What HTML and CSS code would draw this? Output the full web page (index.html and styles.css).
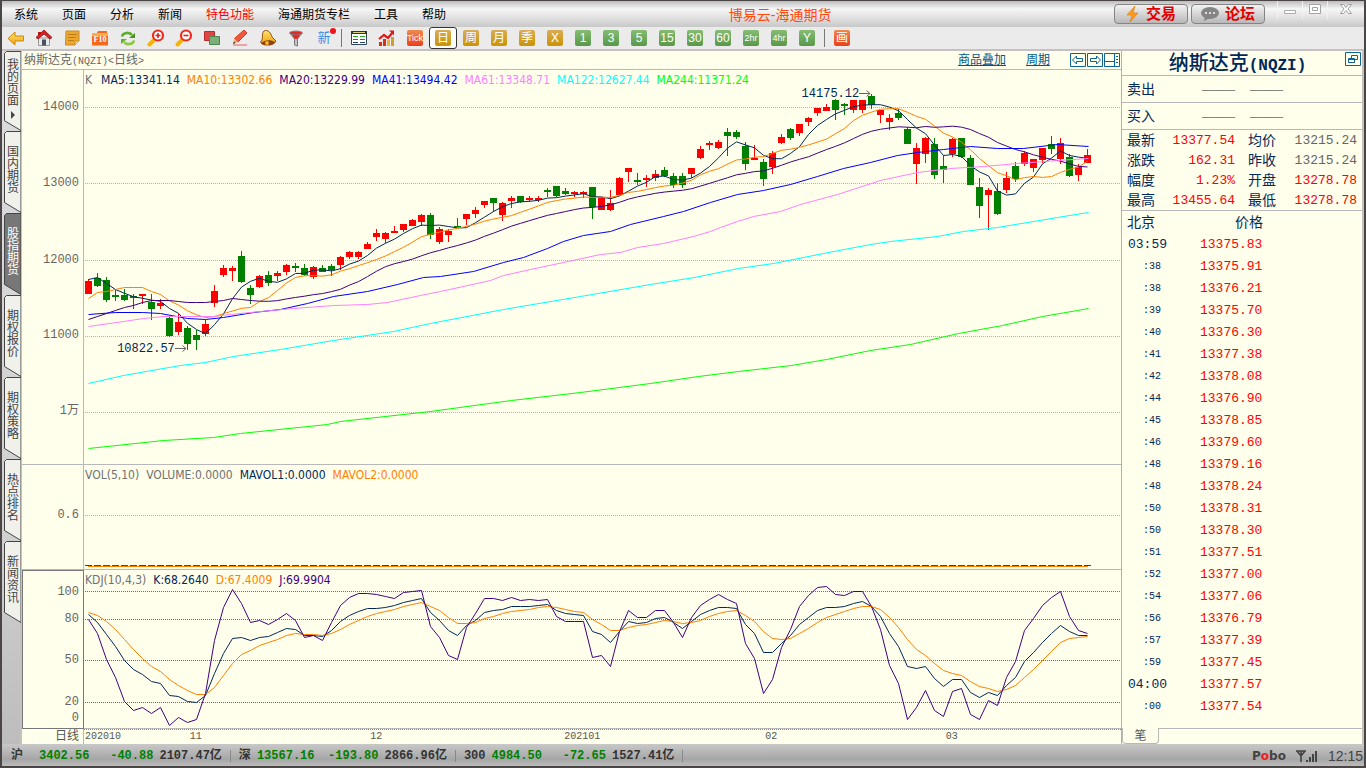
FILE: index.html
```html
<!DOCTYPE html>
<html lang="zh-CN">
<head>
<meta charset="utf-8">
<title>博易云-海通期货</title>
<link rel="stylesheet" href="styles.css">
</head>
<body>
<svg class="defs" aria-hidden="true">
  <defs>
    <linearGradient id="gold" x1="0" y1="0" x2="0" y2="1"><stop offset="0" stop-color="#ffe46a"/><stop offset="1" stop-color="#f0a010"/></linearGradient>
    <symbol id="tab" viewBox="0 0 17 82" preserveAspectRatio="none"><path d="M17 .5H2.500L.5 2.500V71.500L17 81.500Z"/></symbol>
    <symbol id="lens" viewBox="0 0 18 18"><path d="M7 11 2.500 15.500" stroke="#f7b500" stroke-width="4" stroke-linecap="round"/><circle cx="11" cy="6.500" r="5" fill="#fff" stroke="#ee2a1c" stroke-width="2.200"/></symbol>
  </defs>
</svg>
<div class="window">
  <header class="titlebar">
    <nav class="menu">
      <button>系统</button><button>页面</button><button>分析</button><button>新闻</button><button class="hot">特色功能</button><button>海通期货专栏</button><button>工具</button><button>帮助</button>
    </nav>
    <h1 class="app-name">博易云-海通期货</h1>
    <div class="title-actions">
      <button class="pill"><svg width="14" height="16" viewBox="0 0 14 16"><path d="M9 0 1 9h5l-2 7 8-9H7z" fill="#ff9a1a" stroke="#d87800" stroke-width=".6"/></svg>交易</button>
      <button class="pill"><svg width="18" height="14" viewBox="0 0 18 14"><ellipse cx="9" cy="6" rx="9" ry="6" fill="#858585"/><path d="m4 9-1 5 6-3z" fill="#858585"/><path d="M4 5h2v2H4zM8 5h2v2H8zM12 5h2v2h-2z" fill="#ddd"/></svg>论坛</button>
    </div>
    <div class="win-controls">
      <button aria-label="最小化"><svg width="14" height="14"><path d="M1.500 8.500h11v3h-11z" fill="#fff" stroke="#aaa"/></svg></button>
      <button aria-label="最大化"><svg width="14" height="14"><path d="M1.500 2.500h11v9h-11zM4.500 5.500h5v3h-5z" fill="#fff" stroke="#a4a4a4"/></svg></button>
      <button aria-label="关闭"><svg width="14" height="14"><path d="M1.500 2.500h3l2.500 3 2.500-3h3L9 7l3.500 4.500h-3L7 8.500l-2.500 3h-3L5 7z" fill="#fff" stroke="#a0a0a0"/></svg></button>
    </div>
  </header>

  <div class="toolbar">
    <button class="tool" aria-label="后退"><svg width="18" height="18"><path d="M1 9.500 8 3v4h8.500v5H8v4z" fill="url(#gold)" stroke="#c98a10"/></svg></button>
    <button class="tool" aria-label="主页"><svg width="18" height="18"><path d="M3.500 9h11v7.500h-11z" fill="#e8e8ee" stroke="#999"/><path d="M3 3h3v4H3z" fill="#b01818"/><path d="M9 1 1 8.500 3 10l6-5 6 5 2-1.500z" fill="#d82020" stroke="#901010" stroke-width=".8"/><path d="M7 10.500h4v6H7z" fill="#48505e"/></svg></button>
    <button class="tool" aria-label="笔记"><svg width="18" height="18"><path d="M3 2h13v10l-4 4H2.500z" fill="#eba82b" stroke="#c98a2a"/><path d="M5 5.500h9M5 8.500h8M5 11.500h6" stroke="#bb7a1c"/><path d="M12 16v-4h4" fill="#ffe0a0" stroke="#c98a2a"/></svg></button>
    <button class="tool" aria-label="F10"><svg width="18" height="18"><path d="M1 4h5l1-2h9v2h1v12.500H1z" fill="#f26a1c"/><path d="M1 4h16v3H1z" fill="#f8b04a"/><text x="9" y="13" class="ico-text f10">F10</text></svg></button>
    <button class="tool" aria-label="刷新"><svg width="18" height="18"><path d="M3 7.500C4 3 11 3 13 6" fill="none" stroke="#5fae28" stroke-width="2.600"/><path d="M16 4v5h-6z" fill="#4a961c"/><path d="M15 11.500c-1 4.500-8 4.500-10 1.500" fill="none" stroke="#8aca3c" stroke-width="2.600"/><path d="M2 15v-5h6z" fill="#69b02a"/></svg></button>
    <button class="tool" aria-label="放大"><svg width="18" height="18"><use href="#lens"/><path d="M8.500 6.500h5M11 4v5" stroke="#e02018" stroke-width="1.600"/></svg></button>
    <button class="tool" aria-label="缩小"><svg width="18" height="18"><use href="#lens"/><path d="M8.500 6.500h5" stroke="#e02018" stroke-width="1.600"/></svg></button>
    <button class="tool" aria-label="叠加"><svg width="18" height="18"><path d="M1.500 2.500h10v9h-10z" fill="#e04444" stroke="#b82c2c"/><path d="M6.500 7.500h10v8h-10z" fill="#7ab078" stroke="#4d8450"/></svg></button>
    <button class="tool" aria-label="画笔"><svg width="18" height="18"><path d="M2 16h14" stroke="#e88" stroke-width="1.500"/><path d="M13 1 16 4 7 13 3.500 9.500z" fill="#f2563c" stroke="#d43820"/><path d="m3.500 9.500 3.500 3.500-5 2z" fill="#e8b070"/><path d="M2 15l1-2.500 1.500 1.500z" fill="#333"/></svg></button>
    <button class="tool" aria-label="警报"><svg width="18" height="18"><path d="M5 2c4-2 7 2 8 6l4 4-1.500 2L3 15 1.500 13C5 10 2 5 5 2z" fill="url(#gold)" stroke="#935012"/><path d="M2 14c4-3 9-4 14-1l-1 2c-4 2-9 2-12 0z" fill="#8a4412"/><circle cx="8" cy="14" r="2" fill="#f2b030"/></svg></button>
    <button class="tool" aria-label="筛选"><svg width="18" height="18"><path d="M3 4 7.500 10v6l3 1v-7L15 4z" fill="#c4c4c8" stroke="#777"/><ellipse cx="9" cy="4" rx="6.500" ry="2" fill="#e02828" stroke="#8a8a8a"/><path d="M5 6h8l-3 4H8z" fill="#e02828"/></svg></button>
    <button class="tool news">新<i class="dot"></i></button>
    <span class="sep"></span>
    <button class="tool" aria-label="报价"><svg width="18" height="18"><path d="M1.500 2.500h15v13h-15z" fill="#fff" stroke="#345"/><path d="M1 2h16v3H1z" fill="#333"/><path d="M3 3.500h12" stroke="#dcd27a"/><path d="M3 7.500h5M10 7.500h5" stroke="#2a2"/><path d="M3 10.500h5M10 10.500h5" stroke="#d22"/><path d="M3 13.500h5M10 13.500h5" stroke="#246"/></svg></button>
    <button class="tool" aria-label="走势"><svg width="18" height="18"><path d="M1 13h3v4H1zM5 10h3v7H5z" fill="#d83018"/><path d="M9 11h3v6H9z" fill="#eab530"/><path d="M13 8h3v9h-3z" fill="#c8a030"/><path d="M1 10 6 6l4 3 5-6" fill="none" stroke="#e01818" stroke-width="2.200"/><path d="M11 1.500h5v5z" fill="#e01818"/></svg></button>
    <button class="tool"><span class="chip orange tick">Tick</span></button>
    <button class="tool active"><span class="chip amber">日</span></button>
    <button class="tool"><span class="chip amber">周</span></button>
    <button class="tool"><span class="chip amber">月</span></button>
    <button class="tool"><span class="chip amber">季</span></button>
    <button class="tool"><span class="chip amber">X</span></button>
    <button class="tool"><span class="chip green">1</span></button>
    <button class="tool"><span class="chip green">3</span></button>
    <button class="tool"><span class="chip green">5</span></button>
    <button class="tool"><span class="chip green">15</span></button>
    <button class="tool"><span class="chip green">30</span></button>
    <button class="tool"><span class="chip green">60</span></button>
    <button class="tool"><span class="chip green hr">2hr</span></button>
    <button class="tool"><span class="chip green hr">4hr</span></button>
    <button class="tool"><span class="chip green">Y</span></button>
    <span class="sep"></span>
    <button class="tool"><span class="chip orange">画</span></button>
  </div>

  <div class="body">
    <nav class="side-tabs">
      <button class="side-tab first"><svg class="shape"><use href="#tab"/></svg><span>我的页面</span><i class="arrow"></i></button>
      <button class="side-tab"><svg class="shape"><use href="#tab"/></svg><span>国内期货</span></button>
      <button class="side-tab on"><svg class="shape"><use href="#tab"/></svg><span>股指期货</span></button>
      <button class="side-tab"><svg class="shape"><use href="#tab"/></svg><span>期权报价</span></button>
      <button class="side-tab"><svg class="shape"><use href="#tab"/></svg><span>期权策略</span></button>
      <button class="side-tab"><svg class="shape"><use href="#tab"/></svg><span>热点排名</span></button>
      <button class="side-tab"><svg class="shape"><use href="#tab"/></svg><span>新闻资讯</span></button>
    </nav>

    <main class="charts">
      <div class="chart-head">
        <h2>纳斯达克<span class="lat">(NQZI)&lt;</span>日线<span class="lat">&gt;</span></h2>
        <a href="#overlay">商品叠加</a>
        <a href="#period">周期</a>
        <div class="head-icons">
          <button aria-label="向左"><svg width="16" height="14"><path d="M.5.5h15v13H.5zM2.500 7l4-4v2.500h6v3h-6V11z"/></svg></button>
          <button aria-label="向右"><svg width="16" height="14"><path d="M.5.500h15v13H.5zM13.500 7l-4-4v2.500h-6v3h6V11z"/></svg></button>
          <button aria-label="布局"><svg width="16" height="14"><path d="M.5.500h15v13H.5zM10.500 0v14M0 8.500h10M12 3.500h2M12 6.500h2M12 9.500h2"/></svg></button>
        </div>
      </div>
      <div class="panes">
        <div class="axis">
          <span style="top:9.4%">14000</span><span style="top:28.6%">13000</span><span style="top:48.1%">12000</span><span style="top:67.3%">11000</span><span style="top:86.6%">1<b>万</b></span>
        </div>
        <div class="pane">
          <svg id="price" class="plot" viewBox="84 70 1037 394" preserveAspectRatio="none"></svg>
          <div class="legend"><span class="gray key">K</span><span class="navy">MA5:13341.14</span><span class="org">MA10:13302.66</span><span class="vio">MA20:13229.99</span><span class="blu">MA41:13494.42</span><span class="pnk">MA61:13348.71</span><span class="cya">MA122:12627.44</span><span class="lim">MA244:11371.24</span></div>
          <span class="mark" style="left:3.2%;top:70.8%">10822.57<svg width="12" height="7"><path d="M0 3.500h11M7.500.500l3.500 3-3.500 3"/></svg></span>
          <span class="mark" style="left:69.2%;top:6.1%">14175.12<svg width="12" height="7"><path d="M0 3.500h11M7.500.500l3.500 3-3.500 3"/></svg></span>
        </div>
        <div class="axis"><span style="top:47.6%">0.6</span></div>
        <div class="pane">
          <svg id="volume" class="plot" viewBox="84 465 1037 104" preserveAspectRatio="none"></svg>
          <div class="legend"><span class="gray">VOL(5,10)</span><span class="gray">VOLUME:0.0000</span><span class="navy">MAVOL1:0.0000</span><span class="org">MAVOL2:0.0000</span></div>
        </div>
        <div class="axis boxed">
          <span style="top:13.2%">100</span><span style="top:30.8%">80</span><span style="top:56.6%">50</span><span style="top:83.5%">20</span><span style="top:93.5%">0</span>
        </div>
        <div class="pane">
          <svg id="kdj" class="plot" viewBox="84 570 1037 158" preserveAspectRatio="none"></svg>
          <div class="legend"><span class="gray">KDJ(10,4,3)</span><span class="navy">K:68.2640</span><span class="org">D:67.4009</span><span class="vio">J:69.9904</span></div>
        </div>
        <div class="period">日线</div>
        <div class="timeline">
          <span style="left:.1%">202010</span><span style="left:10.2%">11</span><span style="left:27.6%">12</span><span style="left:46.3%">202101</span><span style="left:65.7%">02</span><span style="left:83.1%">03</span>
        </div>
      </div>
    </main>

    <aside class="quote">
      <div class="quote-title">
        <h2>纳斯达克<span class="lat">(NQZI)</span></h2>
        <button aria-label="还原"><svg width="16" height="14"><path d="M.5.500h15v13H.5zM3.500 6.500h6v4h-6zM6.500 6V3.500h6v4H10M3.500 7.500h6"/></svg></button>
      </div>
      <div class="order"><span>卖出</span><span class="dash">———</span><span class="dash">———</span></div>
      <div class="order"><span>买入</span><span class="dash">———</span><span class="dash">———</span></div>
      <table class="stats">
        <tr><th>最新</th><td class="up">13377.54</td><th>均价</th><td>13215.24</td></tr>
        <tr><th>涨跌</th><td class="up">162.31</td><th>昨收</th><td>13215.24</td></tr>
        <tr><th>幅度</th><td class="up">1.23%</td><th>开盘</th><td class="up">13278.78</td></tr>
        <tr><th>最高</th><td class="up">13455.64</td><th>最低</th><td class="up">13278.78</td></tr>
      </table>
      <table class="ticks">
        <thead><tr><th>北京</th><th class="p">价格</th></tr></thead>
        <tbody>
        <tr><td class="big">03:59</td><td>13375.83</td></tr>
        <tr><td>:38</td><td>13375.91</td></tr>
        <tr><td>:38</td><td>13376.21</td></tr>
        <tr><td>:39</td><td>13375.70</td></tr>
        <tr><td>:40</td><td>13376.30</td></tr>
        <tr><td>:41</td><td>13377.38</td></tr>
        <tr><td>:42</td><td>13378.08</td></tr>
        <tr><td>:44</td><td>13376.90</td></tr>
        <tr><td>:45</td><td>13378.85</td></tr>
        <tr><td>:46</td><td>13379.60</td></tr>
        <tr><td>:48</td><td>13379.16</td></tr>
        <tr><td>:48</td><td>13378.24</td></tr>
        <tr><td>:50</td><td>13378.31</td></tr>
        <tr><td>:50</td><td>13378.30</td></tr>
        <tr><td>:51</td><td>13377.51</td></tr>
        <tr><td>:52</td><td>13377.00</td></tr>
        <tr><td>:54</td><td>13377.06</td></tr>
        <tr><td>:56</td><td>13376.79</td></tr>
        <tr><td>:57</td><td>13377.39</td></tr>
        <tr><td>:59</td><td>13377.45</td></tr>
        <tr><td class="big">04:00</td><td>13377.57</td></tr>
        <tr><td>:00</td><td>13377.54</td></tr>
        </tbody>
      </table>
      <div class="quote-tabs"><button>笔</button><span></span></div>
    </aside>
  </div>

  <footer class="status">
    <div class="index"><b class="cn wide">沪</b><b class="down">3402.56</b><b class="down chg">-40.88</b><b>2107.47亿</b></div>
    <div class="index"><b class="cn">深</b><b class="down">13567.16</b><b class="down chg">-193.80</b><b>2866.96亿</b></div>
    <div class="index"><b class="cn">300</b><b class="down">4984.50</b><b class="down chg">-72.65</b><b>1527.41亿</b></div>
    <div class="tray"><b class="brand">P<em>o</em>bo</b><svg width="22" height="12"><path d="M0 1h10M1 1l4 5 4-5M5 1v11" fill="none" stroke="#444" stroke-width="1.600"/><path d="M10 10h2v2h-2zM13 7h2v5h-2zM16 4h2v8h-2zM19 1h2v11h-2z" fill="#444"/></svg><time>12:15</time></div>
  </footer>
</div>
<script src="chart.js"></script>
</body>
</html>
```
FILE: styles.css
```css
* { box-sizing: border-box; }
body {
  margin: 0;
  font: 12px/14px "Liberation Sans", "Noto Sans CJK SC", sans-serif;
  color: #000;
  background: #4a4646;
}
h1, h2 { margin: 0; font-weight: 400; }
button {
  margin: 0; padding: 0; border: 0;
  background: none; color: inherit; font: inherit;
}
.defs { position: absolute; width: 0; height: 0; }
.window {
  height: 100vh;
  display: flex; flex-direction: column;
  border: 2px solid #4a4646;
  border-width: 1px 2px 2px;
  background: #c8c8c8;
}

/* title bar */
.titlebar {
  flex: none; height: 26px;
  display: flex; align-items: center;
  background: linear-gradient(#bcbcbc, #f6f6f6 30%, #e4e4e4 60%, #c8c8c8);
}
.menu { display: flex; gap: 24px; padding: 2px 0 0 12px; }
.hot { color: #f00; }
.app-name { flex: 1; padding-top: 1px; text-align: center; font-size: 14px; color: #ff4a0c; }
.title-actions { display: flex; gap: 3px; }
.pill {
  width: 74px; height: 20px;
  display: flex; align-items: center; justify-content: center; gap: 6px;
  border: 1px solid #848484; border-radius: 4px;
  background: linear-gradient(#f2f2f2, #b8b8b8);
  font-size: 15px; font-weight: 700; color: #e00000;
}
.win-controls { display: flex; align-self: flex-start; margin-left: 12px; }
.win-controls button { width: 25px; height: 18px; border-left: 1px solid #f2f2f2; text-align: center; }
.win-controls button:last-child { width: 37px; }

/* tool bar */
.toolbar {
  flex: none; height: 24px;
  display: flex; align-items: center;
  border-bottom: 2px solid #c8c0c0;
  background: #ebebeb;
}
.tool {
  position: relative;
  width: 28px; height: 22px;
  display: flex; align-items: center; justify-content: center;
}
.tool.active { border: 1px solid #333; border-radius: 3px; background: #fff; }
.sep { width: 1px; height: 18px; margin: 0 3px; background: #777; }
.news { color: #3c8ee0; font-size: 13px; }
.dot { position: absolute; top: 1px; right: 2px; width: 6px; height: 6px; border-radius: 50%; background: #f01414; }
.ico-text { fill: #fff; text-anchor: middle; }
.f10 { font: 700 8px "Liberation Serif", serif; }
.chip {
  width: 16px; height: 16px; border-radius: 2px;
  display: flex; align-items: center; justify-content: center;
  font-size: 12px; line-height: 14px; color: #fff;
}
.amber { background: linear-gradient(#d8ac58, #cc9400); }
.green { background: linear-gradient(#86bc72, #58984a); }
.orange { background: linear-gradient(#f08a4c, #e8401c); }
.hr, .tick { font-size: 9px; }

/* body */
.body { flex: 1; min-height: 0; display: flex; }
.side-tabs {
  width: 20px; flex: none;
  padding-left: 2px;
  background: linear-gradient(#dcdcdf, #d0d0d0 70%, #bdbdbd);
  border-right: 2px solid #c8c0c0;
}
.side-tab {
  position: relative;
  width: 17px; height: 82px; padding: 0 0 4px 3px;
  display: flex; flex-direction: column; align-items: flex-start; justify-content: center;
  color: #444;
}
.side-tab.first { height: 80px; }
.side-tab span { position: relative; width: 12px; line-height: 12px; overflow-wrap: anywhere; }
.side-tab.on { color: #fff; }
.side-tab .shape { position: absolute; inset: 0; width: 17px; height: 100%; fill: #f1f1ec; stroke: #444; }
.side-tab.on .shape { fill: #777; }
.arrow { position: relative; margin: 4px 0 0 4px; border: 4px solid transparent; border-left-color: #444; border-right: 0; }

.charts { flex: 1; min-width: 0; display: flex; flex-direction: column; background: #ffffec; }
.chart-head {
  flex: none; height: 19px;
  display: flex; align-items: center; gap: 20px;
  border-bottom: 1px solid #b8b8b8;
  color: #666;
}
.chart-head h2 { flex: 1; font-size: 12px; padding-left: 2px; }
.chart-head .lat { font: 10px "Liberation Mono", monospace; }
.chart-head a { color: #00598c; }
.head-icons { display: flex; gap: 1px; padding-right: 1px; }
.head-icons svg, .quote-title svg { display: block; fill: none; stroke: #0a6496; }
.panes {
  flex: 1; min-height: 0;
  display: grid;
  grid-template: 395fr 105fr 159fr 15fr / 62px 1fr;
}
.pane, .axis { position: relative; min-height: 0; border-bottom: 1px solid #b8b8b8; }
.axis { border-right: 1px solid #b8b8b8; font: 12px/14px "Liberation Mono", "Noto Sans CJK SC", monospace; color: #666; }
.axis b { font-weight: 400; }
.axis span { position: absolute; right: 4px; transform: translateY(-50%); }
.axis.boxed { border: 1px solid #777; }
.plot { position: absolute; inset: 0; width: 100%; height: 100%; fill: none; shape-rendering: crispEdges; }
.plot polyline { stroke-width: 1px; shape-rendering: auto; }
.legend {
  position: relative;
  display: flex; gap: 7px; padding: 3px 0 0 1px;
  font: 12px/14px "DejaVu Sans Condensed", "DejaVu Sans", sans-serif;
  white-space: nowrap;
}
.key { margin-right: 2px; }
.gray { color: #707070; }
.navy { color: #00285a; }
.org { color: #ff8000; }
.vio { color: #400080; }
.blu { color: #0000ff; }
.pnk { color: #ff80ff; }
.cya { color: #00ffff; }
.lim { color: #00ff00; }
.mark {
  position: absolute; transform: translateY(-50%);
  font: 12px/14px "Liberation Mono", monospace; color: #00285a;
}
.mark svg { fill: none; stroke: #666; }
.period { border-right: 1px solid #b8b8b8; padding-right: 4px; text-align: right; color: #555; }
.timeline { position: relative; border-top: 1px dotted #888; font: 10px/14px "Liberation Mono", monospace; color: #555; }
.timeline span { position: absolute; }

/* quote panel */
.quote {
  width: 243px; flex: none;
  display: flex; flex-direction: column;
  background: #ffffec; color: #00285a;
  border-left: 1px solid #b0b0b0; border-right: 2px solid #c8c0c0;
  font-size: 14px;
}
.quote-title { flex: none; height: 25px; display: flex; align-items: flex-start; padding: 1px 1px 0 8px; border-bottom: 1px solid #b8b8b8; }
.quote-title h2 { flex: 1; text-align: center; font-size: 20px; line-height: 22px; font-weight: 500; }
.quote-title .lat { font: 700 16px "Liberation Mono", monospace; }
.order { flex: none; height: 27px; display: flex; align-items: center; gap: 15px; padding-left: 5px; border-bottom: 1px solid #b8b8b8; }
.order span:first-child { width: 60px; }
.dash { font: 11px "Liberation Sans", sans-serif; color: #666; }
table { border-collapse: collapse; flex: none; }
th { font-weight: 400; text-align: left; padding: 0; }
td { padding: 0; font: 13px/14px "Liberation Mono", monospace; text-align: right; color: #666; }
.stats { width: 235px; margin-left: 5px; }
.stats tr { height: 20px; }
.stats th { width: 30px; }
.stats th:nth-child(3) { width: 43px; padding-left: 13px; }
.stats td { padding-top: 2px; }
.stats td:nth-child(2) { width: 78px; }
.stats td:nth-child(4) { padding-right: 5px; }
.stats .up { color: #f00; }
.ticks { border-top: 1px solid #b8b8b8; width: 100%; }
.ticks tr { height: 22px; }
.ticks th:first-child { width: 45px; padding-left: 5px; }
.ticks .p { padding-left: 68px; }
.ticks td { color: #f00; text-align: left; padding: 2px 0 0 33px; }
.ticks td:first-child { padding: 2px 6px 0 0; text-align: right; font-size: 10px; color: #00285a; }
.ticks td.big:first-child { padding-right: 0; font-size: 13px; }
.quote-tabs { flex: none; height: 16px; margin-top: auto; display: flex; font-size: 12px; color: #555; }
.quote-tabs button { width: 37px; border: 1px solid #b8b8b8; border-width: 0 1px 1px; border-radius: 0 0 4px 4px; }
.quote-tabs span { flex: 1; border-top: 1px solid #b8b8b8; }

/* status bar */
.status {
  flex: none; height: 22px;
  display: flex; align-items: center;
  padding: 2px 1px 0 9px;
  background: linear-gradient(#c8c8c8, #a6a6a6 70%, #bcbcbc);
  font: 12px/14px "Liberation Mono", "Noto Sans CJK SC", monospace;
  color: #333;
}
.index { display: flex; gap: 6px; padding-right: 8px; margin-right: 8px; border-right: 1px solid #888; height: 12px; align-items: center; }
.down { color: #008000; }
.wide { margin-right: 10px; }
.chg { min-width: 58px; text-align: right; }
.tray { margin-left: auto; display: flex; align-items: center; gap: 10px; color: #444; }
.tray b { font: 700 12px "DejaVu Sans", sans-serif; }
.tray em { font-style: normal; color: #f02020; }
.tray time { font: 14px "Liberation Sans", sans-serif; }
```
FILE: chart.js
```js
// Each candle: direction, high, body top, body bottom, low (chart units).
const candles = `R279,281,294,294 G273,278,286,287 G277,280,300,302 G289,295,297,301 G289,295,300,301 G294,296,298,309 R294,294,296,304 G294,302,309,320 R299,303,306,309
G317,318,336,337 R314,322,332,335 G326,328,344,350 G330,335,340,350 R320,324,334,336 R285,291,303,307 R265,268,275,277 R266,268,271,281 G251,256,282,283 G285,288,295,304 R275,276,287,288
G271,275,283,286 R271,273,276,281 R264,265,272,275 G263,266,268,272 G264,268,275,276 R266,267,277,279 G265,268,272,272 G264,266,270,276 R256,257,265,270 R251,252,257,259 R251,252,257,259
R242,244,249,249 R229,233,237,241 R232,233,239,243 R226,231,233,233 R224,224,230,232 R219,220,226,226 R214,215,222,226 G213,215,235,239 R227,229,242,244 R229,231,235,242 G218,226,227,227
R214,214,219,225 R207,210,214,218 R201,201,205,208 G198,198,203,212 R202,203,215,221 R196,198,201,208 G196,196,202,203 R196,198,200,202 R196,198,200,202 G188,190,192,197 G186,186,196,197
G188,191,194,195 R191,192,194,197 R191,192,194,198 G187,187,207,219 R197,197,210,210 R190,203,210,211 R177,178,195,195 R168,168,172,182 G173,180,182,185 R175,178,180,187 R170,174,178,181
G167,170,176,177 G173,176,185,188 G173,176,185,188 R168,168,174,178 R146,149,158,159 R141,143,145,150 R140,142,148,149 G128,132,136,156 G130,132,137,139 G142,146,164,170 R145,158,160,160
G159,162,179,186 R151,153,167,174 R134,137,143,144 G128,129,138,140 R124,124,133,136 R117,118,122,126 R108,108,113,116 R104,107,111,111 G99,100,110,120 G103,104,106,115 R100,100,110,113
R100,100,110,113 G94,96,105,109 R110,110,115,123 R114,118,122,130 G109,113,118,120 G127,129,144,144 R143,148,164,184 R137,138,154,163 G138,144,175,179 G155,166,170,183 R138,139,154,157
G138,138,157,158 G155,158,185,185 G178,187,206,218 R188,190,195,230 G183,191,214,215 R172,178,190,193 G162,166,179,182 R151,153,164,166 R159,159,168,172 R148,148,160,163 G136,144,149,154
R138,143,159,164 G154,157,176,177 R164,167,175,181 R149,155,163,163`.split(/\s+/).map(s => {
  const [high, top, bottom, low] = s.slice(1).split(',').map(Number);
  return { up: s[0] === 'R', high, top, bottom, low, close: s[0] === 'R' ? top : bottom };
});

const xAt = i => 88 + 9 * i;
const add = (svg, name, attrs) => {
  const el = document.createElementNS('http://www.w3.org/2000/svg', name);
  for (const key in attrs) el.setAttribute(key, attrs[key]);
  svg.appendChild(el);
};
const line = (svg, points, stroke) =>
  add(svg, 'polyline', { points: points.map(([x, y]) => `${x + 0.5},${y + 0.5}`).join(' '), stroke });
const guide = (svg, y, stroke) =>
  add(svg, 'path', { d: `M85 ${y + 0.5}H1121`, stroke, 'stroke-dasharray': '1 1' });
const pairs = text => text.split(' ').map(p => p.split(',').map(Number));
const series = text => text.trim().split(/\s+/).map((v, i) => [xAt(i), Number(v)]);
const average = (n, head) => candles.map((c, i) => {
  if (i < n - 1) return [xAt(i), head[i]];
  const part = candles.slice(i - n + 1, i + 1);
  return [xAt(i), part.reduce((sum, k) => sum + k.close, 0) / n];
});

// price pane
const price = document.getElementById('price');
[107, 183, 260, 336, 412].forEach(y => guide(price, y, '#b4b4b4'));
candles.forEach((c, i) => {
  const fill = c.up ? '#ff0000' : '#008000';
  add(price, 'rect', { x: xAt(i), y: c.high, width: 1, height: c.low - c.high, fill });
  add(price, 'rect', { x: xAt(i) - 3, y: c.top, width: 7, height: Math.max(c.bottom - c.top, 1), fill });
});
line(price, average(5, [279, 277, 283, 289]), '#00285a');
line(price, average(10, [298, 292, 291, 289, 287, 287, 287, 291, 294]), '#ff8000');
line(price, average(20, [319, 316, 313, 310, 307, 305, 302, 300, 300, 300, 301, 302, 302, 302, 301, 300, 298, 299, 300]), '#400080');
line(price, pairs('88,314 115,312 142,312 160,313 187,318 205,319 223,317 253,312 280,309 307,303 333,296 367,291 397,284 423,277 440,276 473,271 503,262 523,257 547,248 563,241 583,235 610,231 630,224 663,216 683,211 710,202 737,194 763,190 790,184 817,176 843,168 870,162 897,155 917,152 943,149 970,146 997,148 1023,148 1057,144 1088,146'), '#0000ff');
line(price, pairs('88,326 123,321 143,318 163,316 213,316 230,314 260,311 293,308 333,305 367,304 387,302 420,295 440,291 490,280 503,275 530,269 563,262 600,254 620,252 637,247 663,243 693,236 710,231 720,227 737,221 753,216 780,211 800,204 837,194 880,180 917,172 950,168 983,166 1017,163 1057,160 1088,158'), '#ff80ff');
line(price, pairs('88,383 123,375 180,365 205,362 233,356 280,349 333,340 393,331 430,323 503,309 580,296 650,284 694,277 738,268 773,263 823,253 870,244 890,241 937,236 963,231 997,227 1027,222 1057,217 1088,212'), '#00ffff');
line(price, pairs('88,448 163,440 213,437 240,433 327,424 340,421 430,411 511,400 580,392 650,383 698,376 738,371 791,365 826,359 870,350 910,344 958,333 1002,325 1042,316 1077,310 1088,308'), '#00ff00');

// volume pane
const volume = document.getElementById('volume');
guide(volume, 515, '#b4b4b4');
candles.forEach((c, i) =>
  add(volume, 'rect', { x: xAt(i) - 3, y: 565, width: 7, height: 1, fill: c.up ? '#e00000' : '#008000' }));
add(volume, 'rect', { x: 88, y: 566, width: 1000, height: 1, fill: '#ff8000' });

// KDJ pane
const kdj = document.getElementById('kdj');
[591, 619, 660, 702].forEach(y => guide(kdj, y, '#707070'));
line(kdj, series(`614 622 634 646 660 669 674 681 683 695 696 701 702 695 673 653 638 637 640 637 636 632 628 629 635 635 636 630 621 615 611 608 608 607 605 602 600 598 612 620 630 635 625 620 612 610 609 606 606 606 605 604 610 613 614 615
631 634 642 631 621 623 622 618 617 622 628 621 614 610 607 607 608 624 633 652 652 643 635 624 617 610 607 607 606 603 601 606 616 633 646 666 668 666 678 686 679 679 692 697 692 695 685 677 661 652 642 633 625 631 635 635`), '#00285a');
line(kdj, series(`612 615 621 629 639 649 658 666 671 679 685 690 694 694 687 675 663 654 650 645 642 639 635 633 634 634 635 633 629 624 620 616 613 611 609 606 604 602 606 610 617 623 623 622 618 616 613 611 610 609 607 606 607 609 611 612
619 624 630 630 627 625 624 622 620 621 623 622 620 616 613 611 610 615 621 631 638 639 638 633 628 622 617 614 611 608 606 606 609 617 627 639 649 655 663 670 673 675 681 686 688 691 689 685 677 669 660 651 642 638 637 636`), '#ff8000');
line(kdj, series(`619 633 659 677 701 710 707 713 707 725 717 722 719 693 640 607 589 603 622 620 624 619 613 620 637 635 640 622 605 597 593 593 594 596 598 592 591 590 626 637 655 659 627 613 598 598 600 597 600 599 600 599 616 621 621 621
657 655 666 631 610 617 617 610 610 622 637 617 605 599 594 599 603 643 658 693 679 647 629 606 595 587 586 594 595 591 591 606 629 665 683 719 707 690 710 716 691 688 714 719 700 705 677 661 630 618 605 597 591 616 630 633`), '#400080');
```
